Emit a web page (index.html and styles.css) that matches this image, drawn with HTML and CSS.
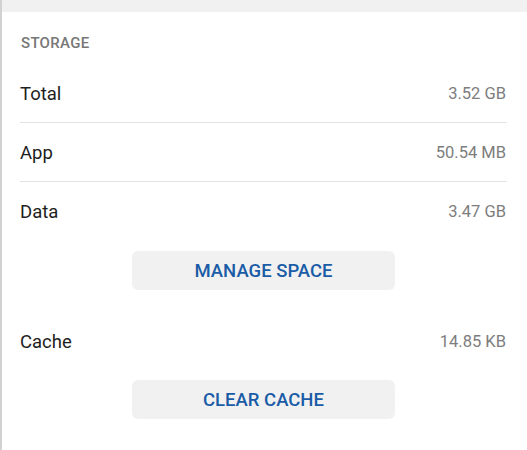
FILE: index.html
```html
<!DOCTYPE html>
<html>
<head>
<meta charset="utf-8">
<link rel="stylesheet" href="styles.css">
</head>
<body>
<div class="page">
  <div class="topband"></div>
  <section class="storage">
    <h2 class="section-title">STORAGE</h2>
    <div class="row divided"><span class="label">Total</span><span class="value">3.52 GB</span></div>
    <div class="row divided"><span class="label">App</span><span class="value">50.54 MB</span></div>
    <div class="row"><span class="label">Data</span><span class="value">3.47 GB</span></div>
    <div class="btn-wrap first"><button class="btn">MANAGE SPACE</button></div>
    <div class="row cache"><span class="label">Cache</span><span class="value">14.85 KB</span></div>
    <div class="btn-wrap"><button class="btn">CLEAR CACHE</button></div>
  </section>
</div>
</body>
</html>
```

FILE: styles.css
```css
html, body {
  margin: 0;
  padding: 0;
  background: #ffffff;
  height: 100%;
}
body {
  font-family: Roboto, "Noto Sans", "Liberation Sans", sans-serif;
}
.page {
  border-left: 2px solid #d2d2d2;
  min-height: 450px;
  box-sizing: border-box;
  background: #fff;
}
.topband {
  height: 12px;
  background: #f1f1f1;
}
.storage {
  padding: 0 20px 0 18px;
}
.section-title {
  margin: 0;
  padding: 21px 0 11px 1px;
  font-size: 15px;
  font-weight: 500;
  line-height: 20px;
  color: #777777;
  letter-spacing: 0.3px;
}
.row {
  display: flex;
  justify-content: space-between;
  align-items: center;
  height: 58px;
}
.row.divided {
  border-bottom: 1px solid #e3e3e3;
}
.label {
  font-size: 18.5px;
  color: #1e1e1e;
  padding-top: 2px;
}
.value {
  font-size: 16.5px;
  color: #7d7d7d;
  padding-right: 1px;
}
.btn-wrap {
  display: flex;
  justify-content: center;
  margin-top: 10px;
}
.btn-wrap.first {
  margin-top: 11px;
  margin-bottom: 22px;
}
.row.cache {
  height: 58px;
}
.btn {
  width: 263px;
  height: 39px;
  border: none;
  border-radius: 6px;
  background: #f1f1f1;
  color: #1a5ca6;
  font-family: Roboto, "Noto Sans", "Liberation Sans", sans-serif;
  font-size: 18.5px;
  font-weight: 500;
  padding: 0;
}
```
